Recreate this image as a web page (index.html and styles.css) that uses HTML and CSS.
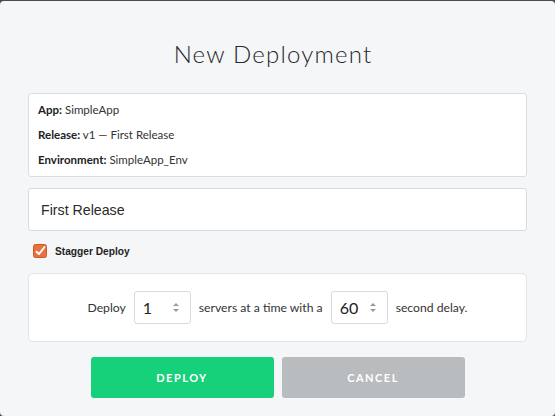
FILE: index.html
```html
<!DOCTYPE html>
<html>
<head>
<meta charset="utf-8">
<link rel="stylesheet" href="styles.css">
</head>
<body>
<div class="modal">
  <h1 class="title">New Deployment</h1>
  <div class="info">
    <div class="info-line"><b>App:</b> SimpleApp</div>
    <div class="info-line"><b>Release:</b> v1 — First Release</div>
    <div class="info-line"><b>Environment:</b> SimpleApp_Env</div>
  </div>
  <div class="text-input">First Release</div>
  <label class="check">
    <svg class="check-box" width="14" height="14" viewBox="0 0 14 14"><rect x="0.5" y="0.5" width="13" height="13" rx="2" fill="#e8713f" stroke="#c65a2c"/><path d="M3 7.2 L6 10 L12 2.5" fill="none" stroke="#fff" stroke-width="2" stroke-linejoin="round"/></svg>
    <span class="check-label">Stagger Deploy</span>
  </label>
  <div class="stagger">
    <span>Deploy</span>
    <div class="num"><span class="num-val">1</span><span class="spin"><i class="up"></i><i class="down"></i></span></div>
    <span>servers at a time with a</span>
    <div class="num"><span class="num-val">60</span><span class="spin"><i class="up"></i><i class="down"></i></span></div>
    <span>second delay.</span>
  </div>
  <div class="actions">
    <button class="btn btn-deploy">DEPLOY</button>
    <button class="btn btn-cancel">CANCEL</button>
  </div>
</div>
</body>
</html>
```
FILE: styles.css
```css
html, body {
  margin: 0;
  padding: 0;
  background: #474a4e;
  height: 100%;
}
body {
  padding-top: 1px;
  box-sizing: border-box;
  font-family: Lato, "Open Sans", sans-serif;
  color: #333;
}
.modal {
  background: #f5f6f8;
  height: 415px;
  border-radius: 4px;
  padding: 0 28px;
  box-sizing: border-box;
  display: flex;
  flex-direction: column;
}
.title {
  margin: 38px 0 0;
  padding-right: 9px;
  height: 29px;
  font-size: 24px;
  font-weight: 300;
  text-align: center;
  line-height: 29px;
  letter-spacing: 1.2px;
  color: #25282c;
}
.info {
  margin-top: 25px;
  background: #fff;
  border: 1px solid #dcdde0;
  border-radius: 3px;
  height: 84px;
  box-sizing: border-box;
  padding: 3px 9px 0;
}
.info-line {
  font-size: 11.5px;
  line-height: 25px;
  color: #333;
}
.info-line b { font-weight: 700; color: #222; }
.text-input {
  margin-top: 11px;
  height: 43px;
  box-sizing: border-box;
  background: #fff;
  border: 1px solid #d9dadd;
  border-radius: 3px;
  padding-left: 12px;
  display: flex;
  align-items: center;
  font-family: "Liberation Sans", Arial, sans-serif;
  font-size: 14.2px;
  color: #2a2a2a;
}
.check {
  margin-top: 13px;
  margin-left: 5px;
  display: flex;
  align-items: center;
  height: 14px;
}
.check-box { flex: none; }
.check-label {
  margin-left: 8px;
  font-family: "Liberation Sans", Arial, sans-serif;
  font-weight: 700;
  font-size: 10.2px;
  color: #222;
}
.stagger {
  margin-top: 15px;
  height: 69px;
  box-sizing: border-box;
  background: #fff;
  border: 1px solid #e3e4e6;
  border-radius: 5px;
  display: flex;
  align-items: center;
  justify-content: center;
  gap: 7px;
  font-size: 12.2px;
  color: #333;
}
.num {
  width: 57px;
  height: 33px;
  box-sizing: border-box;
  border: 1px solid #d9dadd;
  border-radius: 3px;
  display: flex;
  align-items: center;
  padding-left: 8px;
  margin: 0 1px;
  font-size: 16px;
  color: #222;
}
.num-val { flex: 1; }
.spin {
  width: 8px;
  margin-right: 10px;
  display: flex;
  flex-direction: column;
  align-items: center;
  gap: 3px;
}
.spin i {
  width: 0;
  height: 0;
  border-left: 3px solid transparent;
  border-right: 3px solid transparent;
}
.spin .up { border-bottom: 3px solid #999; }
.spin .down { border-top: 3px solid #999; }
.actions {
  margin-top: 15px;
  display: flex;
  justify-content: center;
  gap: 8px;
}
.btn {
  width: 183px;
  height: 41px;
  border: none;
  border-radius: 3px;
  font-family: Lato, sans-serif;
  font-weight: 700;
  font-size: 11px;
  letter-spacing: 1.5px;
  color: #fff;
}
.btn-deploy { background: #16d07a; }
.btn-cancel { background: #b8bcbf; }
```
